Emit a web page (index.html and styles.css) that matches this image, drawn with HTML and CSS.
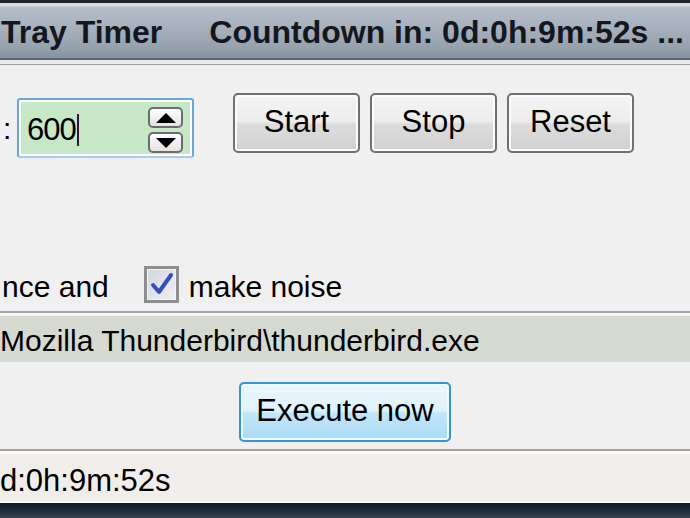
FILE: index.html
```html
<!DOCTYPE html>
<html lang="en">
<head>
    <meta charset="UTF-8">
    <meta name="viewport" content="width=device-width, initial-scale=1.0">
    <title>Tray Timer</title>
    <link rel="stylesheet" href="styles.css">
</head>
<body>

    <div class="window">
        <div class="frame-top"></div>
        <div class="titlebar">
            <span class="app-name">Tray Timer</span>
            <span class="countdown">Countdown in: 0d:0h:9m:52s ...</span>
        </div>

        <div class="content">
            <div class="controls">
                <span class="colon">:</span>
                <div class="spin-box">
                    <span class="spin-value">600</span><span class="caret"></span>
                    <div class="spin-buttons">
                        <div class="spin-btn">
                            <svg width="20" height="10" viewBox="0 0 20 10"><polygon points="10,0 20,10 0,10" fill="#000"/></svg>
                        </div>
                        <div class="spin-btn">
                            <svg width="20" height="10" viewBox="0 0 20 10"><polygon points="0,0 20,0 10,10" fill="#000"/></svg>
                        </div>
                    </div>
                </div>
                <div class="buttons">
                    <button class="btn">Start</button>
                    <button class="btn">Stop</button>
                    <button class="btn">Reset</button>
                </div>
            </div>

            <div class="options">
                <span class="option-text">nce and</span>
                <div class="checkbox">
                    <svg width="29" height="29" viewBox="0 0 29 29">
                        <path d="M6 15 L12 22 L24 5" fill="none" stroke="#3450b8" stroke-width="4" stroke-linecap="round" stroke-linejoin="round"/>
                    </svg>
                </div>
                <span class="option-text">make noise</span>
            </div>

            <div class="path-field">Mozilla Thunderbird\thunderbird.exe</div>

            <div class="actions">
                <button class="btn btn-default">Execute now</button>
            </div>
        </div>

        <div class="statusbar">d:0h:9m:52s</div>
        <div class="frame-bottom"></div>
    </div>

</body>
</html>
```

FILE: styles.css
```css
body {
    margin: 0;
    padding: 0;
    font-family: 'Liberation Sans', Arial, sans-serif;
    background: #f0f0f0;
    color: #000;
    overflow: hidden;
}

.window {
    width: 690px;
    height: 518px;
    display: flex;
    flex-direction: column;
    overflow: hidden;
}

.frame-top {
    height: 3px;
    background: #1e2126;
    border-bottom: 3px solid #d4dae0;
}

.titlebar {
    height: 54px;
    flex-shrink: 0;
    display: flex;
    align-items: center;
    gap: 47px;
    padding: 0 0 0 1px;
    box-sizing: border-box;
    white-space: nowrap;
    font-weight: bold;
    font-size: 32px;
    color: #14181e;
    background: linear-gradient(#b5bec9, #a6b0bc 45%, #96a1ae 80%, #86919f);
    border-bottom: 2px solid #5d6673;
    box-shadow: inset 0 1px 0 #c8d0d9;
}

.content {
    flex-shrink: 0;
    border-top: 4px solid #e6eaee;
    box-shadow: inset 0 1px 0 #9aa0a6;
    padding-top: 29px;
}

.controls {
    display: flex;
    align-items: flex-start;
    height: 65px;
}

.colon {
    font-size: 30px;
    margin: 19px 0 0 3px;
    width: 14px;
}

.spin-box {
    position: relative;
    margin-top: 5px;
    width: 165px;
    height: 53px;
    border: 2px solid #6aa6dc;
    border-bottom-color: #a9cbec;
    border-radius: 3px;
    background: #c7e8c7;
    box-shadow: inset 0 0 0 2px #fff;
    display: flex;
    align-items: center;
    padding: 3px 0 0 8px;
    box-sizing: content-box;
}

.spin-value {
    font-size: 31px;
    letter-spacing: -1px;
}

.caret {
    width: 2px;
    height: 32px;
    background: #3a1040;
    margin-left: 1px;
}

.spin-buttons {
    position: absolute;
    left: 129px;
    top: 7px;
    display: flex;
    flex-direction: column;
    gap: 4px;
}

.spin-btn {
    width: 31px;
    height: 17px;
    border: 2px solid #6c6c6c;
    border-radius: 5px;
    background: linear-gradient(#fdfdfd, #e4e4e4);
    display: flex;
    align-items: center;
    justify-content: center;
}

.buttons {
    display: flex;
    gap: 10px;
    margin-left: 39px;
}

.btn {
    font-family: 'Liberation Sans', Arial, sans-serif;
    font-size: 31px;
    color: #000;
    width: 127px;
    height: 60px;
    padding: 0 0 2px;
    border: 2px solid #707070;
    border-radius: 5px;
    background: linear-gradient(#f4f4f4, #ececec 48%, #dcdcdc 52%, #d0d0d0);
    box-shadow: inset 0 0 0 2px #fbfbfb;
}

.options {
    display: flex;
    align-items: center;
    margin-top: 108px;
    height: 37px;
}

.option-text {
    font-size: 30px;
    padding-top: 5px;
}

.options .option-text:first-child {
    margin-left: 2px;
}

.checkbox {
    width: 29px;
    height: 31px;
    margin: 0 10px 0 35px;
    border: 3px solid #8e8e8e;
    background: linear-gradient(135deg, #d2d6de, #eef0f4);
    box-shadow: inset 0 0 0 1px #f4f4f4;
    display: flex;
    align-items: center;
    justify-content: center;
}

.path-field {
    margin-top: 8px;
    border-top: 2px solid #a4a4a8;
    box-shadow: inset 0 2px 0 #f8f8f8;
    padding: 3px 0 0 0;
    height: 46px;
    line-height: 50px;
    font-size: 30px;
    background: #d6d9d0;
    background-clip: content-box;
    border-bottom: 3px solid #eef2f8;
    white-space: nowrap;
}

.actions {
    display: flex;
    justify-content: center;
    margin-top: 17px;
}

.btn-default {
    width: 212px;
    border-color: #3594d4;
    background: linear-gradient(#eaf6fd, #dff2fc 48%, #c2e6fa 52%, #abdaf3);
    box-shadow: inset 0 0 0 2px #f0fafe;
}

.statusbar {
    flex-shrink: 0;
    margin-top: 7px;
    border-top: 2px solid #a2a2a2;
    box-shadow: inset 0 3px 0 #fafafa;
    padding-top: 3px;
    height: 47px;
    line-height: 54px;
    font-size: 31px;
    background: #f0edeb;
    background-clip: content-box;
    border-bottom: 2px solid #fafafa;
    white-space: nowrap;
    overflow: hidden;
}

.frame-bottom {
    flex: 1;
    background: linear-gradient(#0d1c2e, #23303f 60%, #3a4450);
}
```
